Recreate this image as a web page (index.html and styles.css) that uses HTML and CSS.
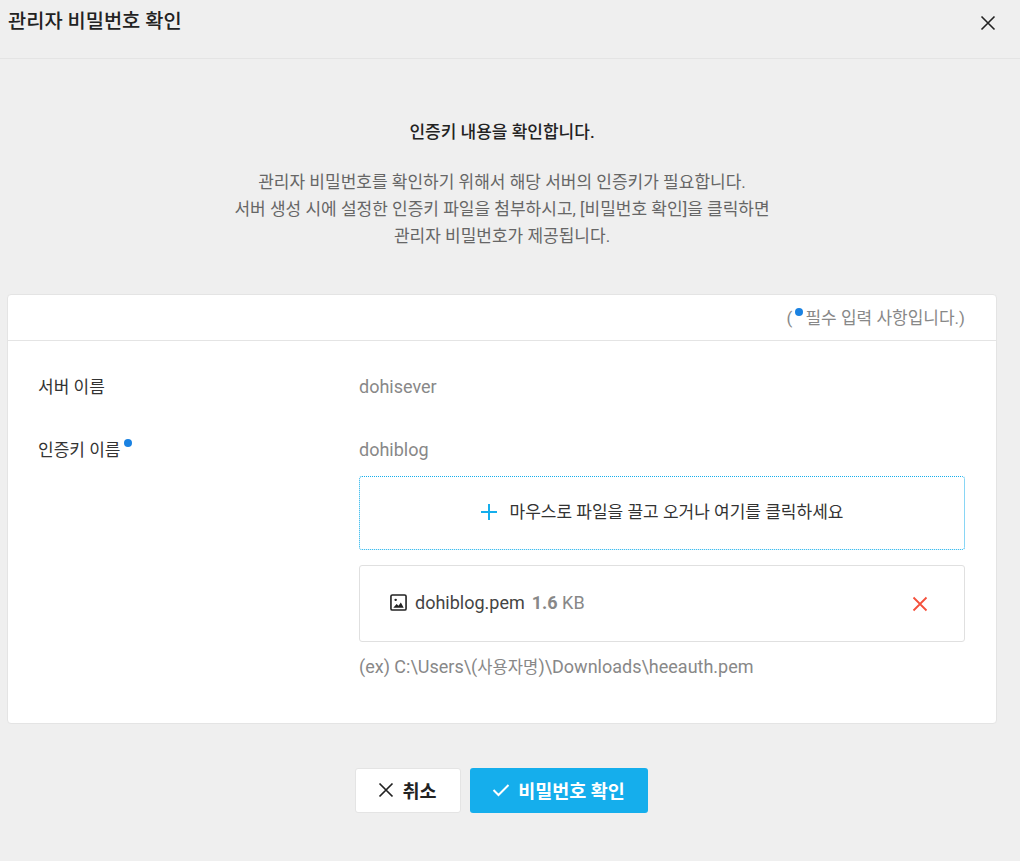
FILE: index.html
```html
<!DOCTYPE html>
<html lang="ko">
<head>
<meta charset="utf-8">
<title>관리자 비밀번호 확인</title>
<link rel="stylesheet" href="styles.css">
</head>
<body>
<header class="head">
  <h1 class="title">관리자 비밀번호 확인</h1>
  <svg class="close" viewBox="0 0 16 16" width="16" height="16"><path d="M1.5 1.5l13 13M14.5 1.5l-13 13" stroke="#222" stroke-width="1.6" fill="none"/></svg>
</header>
<section class="intro">
  <h2 class="intro-title">인증키 내용을 확인합니다.</h2>
  <p class="intro-text">관리자 비밀번호를 확인하기 위해서 해당 서버의 인증키가 필요합니다.<br>서버 생성 시에 설정한 인증키 파일을 첨부하시고, [비밀번호 확인]을 클릭하면<br>관리자 비밀번호가 제공됩니다.</p>
</section>
<section class="card">
  <div class="card-head">(<span class="dot dot-head"></span>필수 입력 사항입니다.)</div>
  <div class="card-body">
    <div class="row row-first">
      <div class="label">서버 이름</div>
      <div class="value">dohisever</div>
    </div>
    <div class="row row-second">
      <div class="label">인증키 이름<span class="dot dot-label"></span></div>
      <div class="field">
        <div class="value">dohiblog</div>
        <div class="drop">
          <svg class="plus" viewBox="0 0 16 16" width="16" height="16"><path d="M8 0v16M0 8h16" stroke="#15aeec" stroke-width="2" fill="none"/></svg>
          <span class="drop-text">마우스로 파일을 끌고 오거나 여기를 클릭하세요</span>
        </div>
        <div class="file">
          <svg class="img-icon" viewBox="0 0 18 18" width="17" height="17"><rect x="1" y="1" width="16" height="16" rx="1.5" fill="none" stroke="#222" stroke-width="1.7"/><circle cx="6" cy="6.2" r="1.3" fill="#222"/><path d="M3.5 14.5l3.5-4 2 2 2.5-3.5 3 5.5z" fill="#222"/></svg>
          <span class="file-name">dohiblog.pem</span>
          <span class="file-size"><b>1.6</b> KB</span>
          <svg class="remove" viewBox="0 0 16 16" width="16" height="16"><path d="M1.5 1.5l13 13M14.5 1.5l-13 13" stroke="#f4503c" stroke-width="1.8" fill="none"/></svg>
        </div>
        <div class="hint">(ex) C:\Users\(<span class="hint-ko">사용자명</span>)\Downloads\heeauth.pem</div>
      </div>
    </div>
  </div>
</section>
<footer class="actions">
  <button class="btn btn-cancel" type="button">
    <svg viewBox="0 0 16 16" width="16" height="16"><path d="M1.5 1.5l13 13M14.5 1.5l-13 13" stroke="#222" stroke-width="1.7" fill="none"/></svg>
    취소
  </button>
  <button class="btn btn-ok" type="button">
    <svg viewBox="0 0 18 14" width="18" height="14"><path d="M1.5 7l5 5 10-10" stroke="#fff" stroke-width="2" fill="none"/></svg>
    비밀번호 확인
  </button>
</footer>
</body>
</html>
```
FILE: styles.css
```css
* { box-sizing: border-box; }
html, body { margin: 0; padding: 0; }
body {
  width: 1020px;
  height: 861px;
  overflow: hidden;
  background: #efefef;
  color: #222;
  font-family: Roboto, "Noto Sans CJK KR", sans-serif;
  font-size: 16px;
}
.head {
  height: 59px;
  border-bottom: 1px solid #e4e4e4;
  padding: 8px 24px 0 8px;
  display: flex;
  justify-content: space-between;
  align-items: flex-start;
}
.title { margin: 0; font-size: 19.8px; line-height: 28px; font-weight: 500; color: #222; }
.close { margin-top: 7px; }
.intro { padding-top: 59px; text-align: center; height: 235px; width: 1004px; }
.intro-title { margin: 0; font-size: 17px; line-height: 28px; font-weight: 500; color: #222; }
.intro-text { margin: 23px 0 0; font-size: 17px; line-height: 27px; color: #666; }
.card {
  margin: 0 23px 0 7px;
  height: 430px;
  background: #fff;
  border: 1px solid #e4e4e4;
  border-radius: 4px;
}
.card-head {
  height: 46px;
  border-bottom: 1px solid #e4e4e4;
  padding: 9px 31px 0 0;
  text-align: right;
  font-size: 17px;
  line-height: 28px;
  color: #888;
}
.dot { display: inline-block; width: 8px; height: 8px; border-radius: 50%; background: #1a82e2; vertical-align: 8px; }
.dot-head { margin: 0 2px 0 3px; }
.dot-label { margin-left: 4px; vertical-align: 9px; }
.card-body { padding: 31px 31px 0 30px; }
.row { display: grid; grid-template-columns: 321px 606px; }
.row-second { margin-top: 33px; }
.label { font-size: 17px; line-height: 28px; color: #333; padding-top: 1px; }
.value { font-size: 18px; line-height: 30px; color: #888; }
.drop {
  margin-top: 11px;
  height: 74px;
  border: 1px dotted #15aeec;
  border-radius: 3px;
  display: flex;
  align-items: center;
  justify-content: center;
  gap: 13px;
  font-size: 17px;
  color: #333;
}
.plus { position: relative; top: -1px; }
.drop-text { position: relative; top: -3px; }
.file {
  margin-top: 15px;
  height: 77px;
  border: 1px solid #e0e0e0;
  border-radius: 3px;
  padding: 0 36px 0 30px;
  display: flex;
  align-items: center;
  font-size: 18px;
  color: #444;
}
.img-icon { margin-right: 8px; position: relative; top: -1px; }
.file-name { margin-right: 8px; position: relative; top: -1px; }
.file-size { color: #888; position: relative; top: -1px; margin-left: -1px; }
.remove { margin-left: auto; }
.hint { margin-top: 11px; font-size: 18px; line-height: 28px; color: #888; }
.hint-ko { font-size: 16.6px; }
.actions { margin-top: 44px; display: flex; justify-content: center; gap: 9px; padding-right: 18px; }
.btn {
  height: 45px;
  border-radius: 3px;
  display: inline-flex;
  align-items: center;
  justify-content: center;
  gap: 8px;
  font-family: inherit;
  font-size: 18.5px;
  font-weight: 700;
  padding: 0 0 2px;
}
.btn-cancel { width: 106px; background: #fff; border: 1px solid #e4e4e4; color: #222; }
.btn-ok { width: 178px; background: #15aeec; border: 0; color: #fff; }
```
